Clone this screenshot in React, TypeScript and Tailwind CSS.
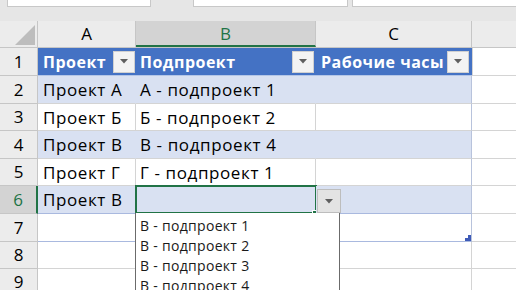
import clsx from 'clsx'

const FONT = "font-['Open_Sans',sans-serif]"

function Caret() {
  return (
    <svg width="8" height="5" viewBox="0 0 8 5">
      <path d="M0 0h8L4 4.5z" fill="#5f5f5f" />
    </svg>
  )
}

function FilterBtn() {
  return (
    <div className="w-[22px] h-[22px] bg-[#f3f3f3] border border-[#d0d0d0] flex items-center justify-center shrink-0">
      <Caret />
    </div>
  )
}

type Row = {
  n: number
  h: string
  a?: string
  b?: string
  band?: boolean
  table?: boolean
  edge?: string
}

const rows: Row[] = [
  { n: 2, h: 'h-[28px]', a: 'Проект А', b: 'А - подпроект 1', band: true, table: true },
  { n: 3, h: 'h-[27px]', a: 'Проект Б', b: 'Б - подпроект 2', table: true },
  { n: 4, h: 'h-[28px]', a: 'Проект В', b: 'В - подпроект 4', band: true, table: true },
  { n: 5, h: 'h-[27px]', a: 'Проект Г', b: 'Г - подпроект 1', table: true },
  { n: 6, h: 'h-[28px]', a: 'Проект В', b: '', band: true, table: true, edge: 'border-b-[#a9b9df]' },
  { n: 7, h: 'h-[28px]', table: true, edge: 'border-b-[#a9b9df]' },
  { n: 8, h: 'h-[27px]' },
  { n: 9, h: 'h-[27px]' },
]

const options = ['В - подпроект 1', 'В - подпроект 2', 'В - подпроект 3', 'В - подпроект 4']

export default function App() {
  return (
    <div className={clsx('w-[516px] h-[290px] overflow-hidden bg-white text-black', FONT)}>
      {/* formula bar strip */}
      <div className="h-[21px] bg-[#e6e6e6] flex items-start">
        <div className="ml-[7px] w-[144px] h-[7px] bg-white border border-t-0 border-[#c8c8c8]" />
        <div className="ml-[42px] w-[155px] h-[7px] bg-white border border-t-0 border-[#c8c8c8]" />
        <div className="ml-[4px] flex-1 h-[7px] bg-white border border-t-0 border-r-0 border-[#c8c8c8]" />
      </div>

      {/* column headers */}
      <div className="h-[27px] flex bg-[#ececec] border-b border-[#c6c6c6] text-[17px] leading-[26px]">
        <div className="w-[38px] border-r border-[#c6c6c6] flex items-end justify-end pr-[2px] pb-[2px]">
          <svg width="20" height="20" viewBox="0 0 20 20">
            <path d="M20 0V20H0z" fill="#bdbdbd" />
          </svg>
        </div>
        <div className="w-[98px] border-r border-[#c6c6c6] text-center">A</div>
        <div className="w-[180px] border-r border-[#c6c6c6] bg-[#d3d3d3] text-center text-[#217346] border-b-2 border-b-[#217346]">B</div>
        <div className="w-[156px] border-r border-[#c6c6c6] text-center">C</div>
        <div className="flex-1" />
      </div>

      {/* row 1: table header */}
      <div className="h-[28px] flex text-[16px] tracking-[0.5px]">
        <div className="w-[38px] bg-[#ececec] border-r border-b border-[#c6c6c6] flex items-center justify-center text-[17px] tracking-normal">1</div>
        <div className="w-[98px] bg-[#4472c4] text-white font-bold flex items-center justify-between pl-[5px] pr-px border-b border-[#b4c6e7]">
          <span>Проект</span>
          <FilterBtn />
        </div>
        <div className="w-[180px] bg-[#4472c4] text-white font-bold flex items-center justify-between pl-[4px] pr-[2px] border-b border-[#b4c6e7]">
          <span>Подпроект</span>
          <FilterBtn />
        </div>
        <div className="w-[156px] bg-[#4472c4] text-white font-bold flex items-center justify-between pl-[5px] pr-[3px] border-b border-[#b4c6e7]">
          <span className="whitespace-nowrap">Рабочие часы</span>
          <FilterBtn />
        </div>
        <div className="flex-1 border-b border-l border-[#d4d4d4]" />
      </div>

      {rows.map(r => {
        const sel = r.n === 6
        const line = r.edge ?? 'border-b-[#d4d4d4]'
        return (
          <div key={r.n} className={clsx('flex text-[17px] tracking-[0.6px]', r.h)}>
            <div
              className={clsx(
                'w-[38px] border-b border-r border-[#c6c6c6] flex items-center justify-center tracking-normal',
                sel ? 'bg-[#d3d3d3] text-[#217346] border-r-2 border-r-[#217346]' : 'bg-[#ececec]'
              )}
            >
              {r.n}
            </div>
            <div
              className={clsx(
                'w-[98px] border-b border-r pl-[5px] flex items-center whitespace-nowrap pt-[1px]',
                line,
                r.band ? 'bg-[#d9e1f2] border-r-[#d9e1f2]' : 'border-r-[#d4d4d4]'
              )}
            >
              {r.a}
            </div>
            <div
              className={clsx(
                'w-[180px] border-b border-r pl-[4px] flex items-center whitespace-nowrap relative pt-[1px]',
                line,
                r.band ? 'bg-[#d9e1f2] border-r-[#d9e1f2]' : 'border-r-[#d4d4d4]'
              )}
            >
              {r.b}
              {sel && (
                <>
                  <div className="absolute -left-px -top-px w-[182px] h-[29px] border-2 border-[#217346]" />
                  <div className="absolute right-[-3px] bottom-[-3px] w-[6px] h-[6px] bg-[#217346] border border-white" />
                  <div className="absolute left-[181px] top-[3px] w-[24px] h-[24px] bg-[#e3e3e3] border border-[#bdbdbd] flex items-center justify-center z-10">
                    <Caret />
                  </div>
                  <div className="absolute -left-px top-[27px] w-[205px] h-[90px] bg-white border border-[#6b6b6b] border-t-0 z-20 pt-[3px] text-[14px] leading-[20px] tracking-[0.3px] text-[#1a1a1a]">
                    {options.map(o => (
                      <div key={o} className="pl-[4px] whitespace-nowrap">{o}</div>
                    ))}
                  </div>
                </>
              )}
            </div>
            <div
              className={clsx(
                'w-[156px] border-b border-r relative',
                line,
                r.table ? 'border-r-[#b8c3dc]' : 'border-r-[#d4d4d4]',
                r.band && 'bg-[#d9e1f2]'
              )}
            >
              {r.n === 7 && (
                <svg className="absolute right-0 bottom-0" width="6" height="6" viewBox="0 0 6 6">
                  <path d="M6 0V6H0V3H3V0z" fill="#3f5bb8" />
                </svg>
              )}
            </div>
            <div className="flex-1 border-b border-[#d4d4d4]" />
          </div>
        )
      })}
    </div>
  )
}
